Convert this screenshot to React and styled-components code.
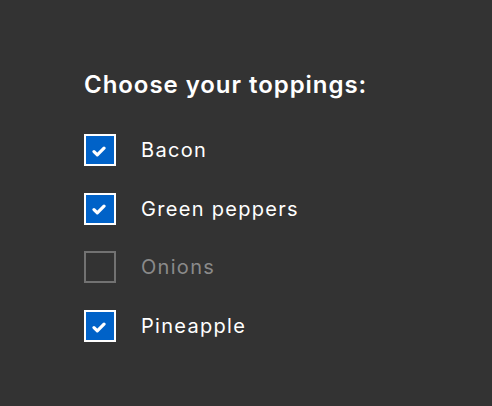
import React, { useState } from 'react';
import styled, { createGlobalStyle } from 'styled-components';

const GlobalStyle = createGlobalStyle`
  html, body {
    margin: 0;
    padding: 0;
    background: #333333;
  }
  body {
    font-family: Inter, "Open Sans", "Liberation Sans", sans-serif;
    color: #ffffff;
  }
`;

const toppings = [
  { name: 'Bacon', checked: true },
  { name: 'Green peppers', checked: true },
  { name: 'Onions', checked: false, muted: true },
  { name: 'Pineapple', checked: true },
];

const App = () => {
  const [items, setItems] = useState(toppings);

  const toggle = index =>
    setItems(list =>
      list.map((item, i) => (i === index ? { ...item, checked: !item.checked } : item)),
    );

  return (
    <Page>
      <GlobalStyle />
      <Fieldset>
        <Legend>Choose your toppings:</Legend>
        <List>
          {items.map(({ name, checked, muted }, i) => (
            <Option key={name} onClick={() => toggle(i)}>
              <Box checked={checked} muted={muted}>
                {checked && <CheckMark />}
              </Box>
              <Label muted={muted}>{name}</Label>
            </Option>
          ))}
        </List>
      </Fieldset>
    </Page>
  );
};

export default App;

const CheckMark = () => (
  <Tick width="14" height="11" viewBox="0 0 14 11">
    <polyline
      fill="none"
      stroke="#ffffff"
      strokeWidth="3.2"
      strokeLinecap="round"
      strokeLinejoin="round"
      points="2,5.6 5.3,8.8 12,2.2"
    />
  </Tick>
);

const Page = styled.div`
  min-height: 406px;
  box-sizing: border-box;
  padding: 70px 0 0 84px;
`;

const Fieldset = styled.div`
  display: flex;
  flex-direction: column;
`;

const Legend = styled.h2`
  margin: 0 0 34px;
  font-size: 24px;
  line-height: 30px;
  font-weight: 600;
  letter-spacing: 0.95px;
`;

const List = styled.div`
  display: flex;
  flex-direction: column;
  gap: 26.7px;
`;

const Option = styled.div`
  display: flex;
  align-items: center;
  height: 32px;
  cursor: pointer;
`;

const Box = styled.span`
  box-sizing: border-box;
  width: 32px;
  height: 32px;
  flex: none;
  display: flex;
  align-items: center;
  justify-content: center;
  border: 2px solid ${p => (p.muted ? '#727272' : '#ffffff')};
  background: ${p => (p.checked ? '#0062c8' : 'transparent')};
`;

const Tick = styled.svg`
  display: block;
  margin: 2px 2px 0 0;
`;

const Label = styled.span`
  margin-left: 25px;
  font-size: 20px;
  line-height: 24px;
  letter-spacing: 1.3px;
  color: ${p => (p.muted ? '#8a8a8a' : '#ffffff')};
`;
